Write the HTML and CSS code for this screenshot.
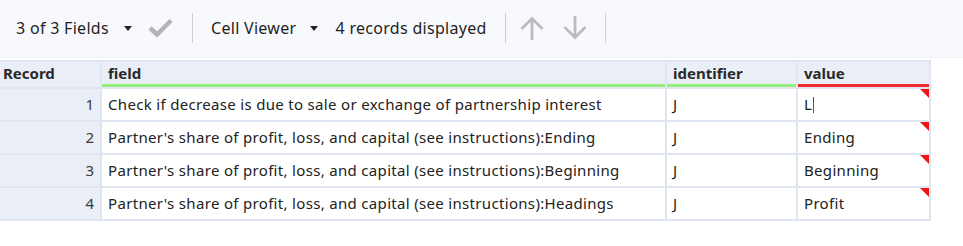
FILE: index.html
```html
<!DOCTYPE html>
<html>
<head>
<meta charset="utf-8">
<link rel="stylesheet" href="styles.css">
</head>
<body>
<div class="toolbar">
  <span class="tb-label tb-fields">3 of 3 Fields</span>
  <svg class="caret" width="8" height="5" viewBox="0 0 8 5"><path d="M0 0H8L4 5Z" fill="#222"/></svg>
  <svg class="check" width="25" height="19" viewBox="0 0 25 19"><path d="M2 10 L9 16.5 L23 2.5" fill="none" stroke="#b4b4b4" stroke-width="4.5" stroke-linejoin="miter"/></svg>
  <span class="sep"></span>
  <span class="tb-label tb-viewer">Cell Viewer</span>
  <svg class="caret caret-2" width="8" height="5" viewBox="0 0 8 5"><path d="M0 0H8L4 5Z" fill="#222"/></svg>
  <span class="tb-label tb-count">4 records displayed</span>
  <span class="sep sep-2"></span>
  <svg class="arrow" width="26" height="24" viewBox="0 0 26 24"><path d="M13 24V2.5 M2.5 13 L13 2.5 L23.5 13" fill="none" stroke="#bcbcbc" stroke-width="2.8"/></svg>
  <svg class="arrow arrow-down" width="26" height="24" viewBox="0 0 26 24"><path d="M13 0V21.5 M2.5 11 L13 21.5 L23.5 11" fill="none" stroke="#bcbcbc" stroke-width="2.8"/></svg>
  <span class="sep sep-3"></span>
</div>
<div class="grid">
  <div class="hd hd-rec">Record</div>
  <div class="hd ul-green">field</div>
  <div class="hd ul-green">identifier</div>
  <div class="hd ul-red">value</div>

  <div class="num">1</div>
  <div class="cell">Check if decrease is due to sale or exchange of partnership interest</div>
  <div class="cell">J</div>
  <div class="cell val">L<span class="cursor"></span></div>

  <div class="num">2</div>
  <div class="cell">Partner's share of profit, loss, and capital (see instructions):Ending</div>
  <div class="cell">J</div>
  <div class="cell val">Ending</div>

  <div class="num">3</div>
  <div class="cell">Partner's share of profit, loss, and capital (see instructions):Beginning</div>
  <div class="cell">J</div>
  <div class="cell val">Beginning</div>

  <div class="num">4</div>
  <div class="cell">Partner's share of profit, loss, and capital (see instructions):Headings</div>
  <div class="cell">J</div>
  <div class="cell val">Profit</div>
</div>
</body>
</html>
```
FILE: styles.css
```css
* { box-sizing: border-box; }
body {
  margin: 0;
  background: #ffffff;
  font-family: "Noto Sans", "Open Sans", sans-serif;
  color: #222;
}
.toolbar {
  height: 58px;
  background: #f7f9fc;
  border-bottom: 1px solid #eef1f6;
  display: flex;
  align-items: center;
  padding-left: 16px;
  padding-bottom: 2px;
  font-size: 16px;
  letter-spacing: 0.3px;
}
.tb-label { color: #1f1f1f; white-space: nowrap; }
.caret { margin-left: 15px; margin-top: 1px; }
.caret-2 { margin-left: 14px; }
.check { margin-left: 16px; }
.sep {
  width: 1px;
  height: 30px;
  background: #cfcfcf;
  margin: 0 18px 0 19px;
}
.tb-count { margin-left: 17px; }
.sep-2 { margin: 0 13px 0 18px; }
.arrow { margin-right: 17px; }
.arrow-down { margin-right: 0; }
.sep-3 { margin-left: 17px; }
.grid {
  margin-top: 2px;
  display: grid;
  grid-template-columns: 100px 563px 129px 131px;
  grid-template-rows: 25px repeat(4, 31px);
  gap: 2px;
  width: 931px;
  padding: 2px 2px 2px 0;
  background: #dfe6f2;
  font-size: 15px;
}
.hd {
  background: #e9eef7;
  font-weight: bold;
  color: #2a2a2a;
  padding: 1px 0 0 6px;
  line-height: 20px;
}
.hd-rec { padding-left: 3px; }
.ul-green { box-shadow: inset 0 -3px 0 #98ee7c; }
.ul-red { box-shadow: inset 0 -3px 0 #f22b2b; }
.num {
  background: #e9eef7;
  text-align: right;
  padding-right: 6px;
  line-height: 30px;
  color: #3a3a3a;
}
.cell {
  background: #ffffff;
  padding-left: 6px;
  line-height: 30px;
  white-space: nowrap;
  overflow: hidden;
  color: #222;
  letter-spacing: 0.32px;
}
.val { position: relative; }
.val::after {
  content: "";
  position: absolute;
  top: 0;
  right: 0;
  border-style: solid;
  border-width: 0 9px 9px 0;
  border-color: transparent #f01414 transparent transparent;
}
.cursor {
  display: inline-block;
  width: 1px;
  height: 16px;
  background: #555;
  vertical-align: -3px;
  margin-left: 1px;
}
```
